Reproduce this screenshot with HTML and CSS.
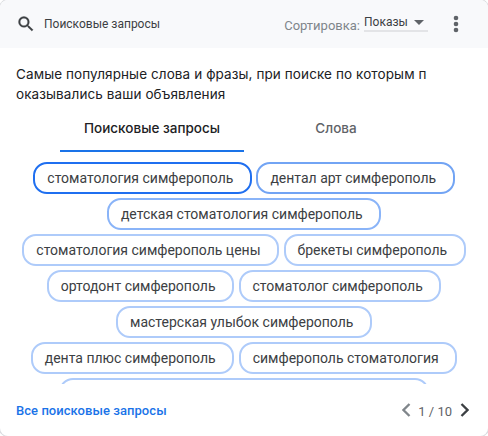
FILE: index.html
```html
<!DOCTYPE html>
<html lang="ru">
<head>
  <meta charset="UTF-8" />
  <meta name="viewport" content="width=device-width, initial-scale=1.0"/>
  <title>Поисковые запросы</title>
  <link rel="stylesheet" href="styles.css">
</head>
<body>
  <div class="card">
    <header class="card-header">
      <svg class="search-icon" viewBox="0 0 24 24"><path d="M15.5 14h-.79l-.28-.27A6.47 6.47 0 0 0 16 9.5 6.5 6.5 0 1 0 9.5 16c1.61 0 3.09-.59 4.23-1.57l.27.28v.79l5 4.99L20.49 19l-4.99-5zm-6 0C7.01 14 5 11.99 5 9.5S7.01 5 9.5 5 14 7.01 14 9.5 11.99 14 9.5 14z"/></svg>
      <span class="card-name">Поисковые запросы</span>
      <span class="sort-label">Сортировка:</span>
      <div class="sort-select">
        <span class="sort-value">Показы</span>
        <svg class="arrow" viewBox="0 0 10 5"><path d="M0 0h10L5 5z"/></svg>
      </div>
      <svg class="more-icon" viewBox="0 0 6 18"><circle cx="3" cy="3" r="2.3"/><circle cx="3" cy="9" r="2.3"/><circle cx="3" cy="15" r="2.3"/></svg>
    </header>

    <div class="description">
      <div class="line">Самые популярные слова и фразы, при поиске по которым п</div>
      <div class="line">оказывались ваши объявления</div>
    </div>

    <nav class="tabs">
      <div class="tab active">Поисковые запросы</div>
      <div class="tab">Слова</div>
    </nav>

    <div class="chips">
      <div class="chip-row">
        <span class="chip level-1">стоматология симферополь</span>
        <span class="chip level-2">дентал арт симферополь</span>
      </div>
      <div class="chip-row">
        <span class="chip level-3">детская стоматология симферополь</span>
      </div>
      <div class="chip-row">
        <span class="chip">стоматология симферополь цены</span>
        <span class="chip">брекеты симферополь</span>
      </div>
      <div class="chip-row">
        <span class="chip">ортодонт симферополь</span>
        <span class="chip">стоматолог симферополь</span>
      </div>
      <div class="chip-row">
        <span class="chip">мастерская улыбок симферополь</span>
      </div>
      <div class="chip-row">
        <span class="chip">дента плюс симферополь</span>
        <span class="chip">симферополь стоматология</span>
      </div>
      <div class="chip-row">
        <span class="chip chip-cut"></span>
      </div>
    </div>

    <footer class="card-footer">
      <a class="all-link">Все поисковые запросы</a>
      <div class="pager">
        <svg class="chevron prev" viewBox="0 0 9 14"><path d="M7.5 1L1.5 7l6 6"/></svg>
        <span class="pages">1 / 10</span>
        <svg class="chevron next" viewBox="0 0 9 14"><path d="M1.5 1l6 6-6 6"/></svg>
      </div>
    </footer>
  </div>
</body>
</html>
```

FILE: styles.css
```css
* {
  box-sizing: border-box;
}
body {
  margin: 0;
  background-color: #fff;
  font-family: Roboto, Arial, sans-serif;
  color: #3c4043;
}
.card {
  display: flex;
  flex-direction: column;
  width: 488px;
  height: 436px;
  border-radius: 8px;
  box-shadow: 0 0 0 1px #dadce0;
  overflow: hidden;
  background-color: #fff;
}
.card-header {
  display: flex;
  align-items: center;
  height: 48px;
  padding: 0 29px 0 16px;
  background-color: #f8f9fb;
}
.search-icon {
  width: 20px;
  height: 20px;
  margin-right: 8px;
  fill: #3c4043;
  stroke: #3c4043;
  stroke-width: 0.4;
}
.card-name {
  font-size: 12px;
}
.sort-label {
  margin: 3px 4px 0 auto;
  font-size: 13px;
  color: #80868b;
}
.sort-select {
  display: flex;
  align-items: center;
  justify-content: space-between;
  width: 64px;
  height: 20px;
  margin: -4px 25px 0 0;
  padding: 2px 4px 0 0;
  border-bottom: 2px solid #e3e4e7;
}
.sort-value {
  font-size: 12px;
}
.arrow {
  width: 10px;
  height: 5px;
  fill: #5f6368;
}
.more-icon {
  width: 6px;
  height: 18px;
  fill: #5f6368;
}
.description {
  padding: 16px 16px 0;
  font-family: Inter, sans-serif;
  font-size: 13.5px;
  line-height: 20px;
  letter-spacing: 0.1px;
  color: #202124;
}
.line {
  white-space: nowrap;
}
.tabs {
  display: flex;
  height: 48px;
  padding: 0 60px;
  font-family: Inter, sans-serif;
  font-size: 13.5px;
  font-weight: 450;
  color: #5f6368;
}
.tab {
  width: 184px;
  padding-top: 14px;
  line-height: 20px;
  text-align: center;
  border-bottom: 2px solid transparent;
}
.tab.active {
  color: #202124;
  border-bottom-color: #1a73e8;
}
.chips {
  height: 232px;
  padding-top: 10px;
  overflow: hidden;
}
.chip-row {
  display: flex;
  justify-content: center;
  gap: 4.5px;
  margin-bottom: 4px;
}
.chip {
  height: 32px;
  padding: 0 16.5px 0 12px;
  border: 2px solid #aecbfa;
  border-radius: 14px;
  font-size: 14px;
  line-height: 28px;
  white-space: nowrap;
}
.level-1 {
  border-color: #1f6ff0;
}
.level-2 {
  border-color: #72a4f4;
}
.level-3 {
  border-color: #8ab4f8;
}
.chip-cut {
  width: 370px;
}
.card-footer {
  display: flex;
  align-items: center;
  justify-content: space-between;
  height: 52px;
  padding: 0 19px 0 16px;
}
.all-link {
  font-size: 13px;
  font-weight: 500;
  letter-spacing: 0.05px;
  color: #1a73e8;
}
.pager {
  display: flex;
  align-items: center;
}
.chevron {
  width: 9px;
  height: 14px;
  fill: none;
  stroke-width: 2.3;
}
.prev {
  stroke: #80868b;
}
.next {
  stroke: #3c4043;
}
.pages {
  margin: 2px 8px 0 7px;
  font-size: 13px;
  color: #5f6368;
}
```
